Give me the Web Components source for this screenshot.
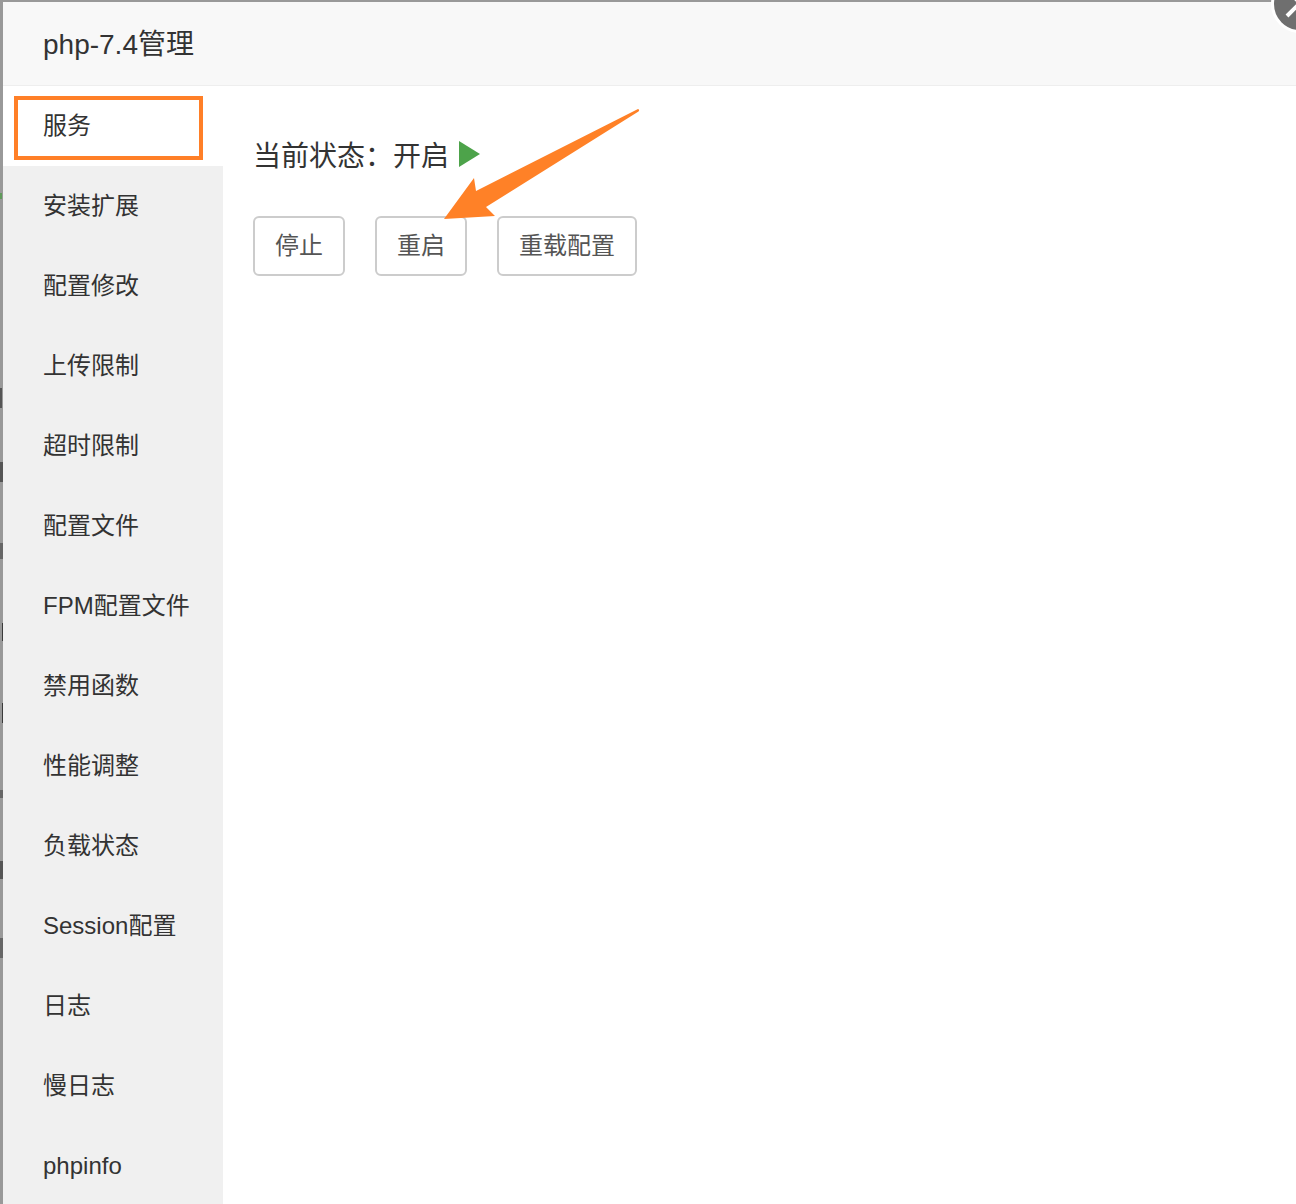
<!DOCTYPE html>
<html lang="zh">
<head>
<meta charset="utf-8">
<title>php-7.4管理</title>
<style>
  html, body { margin: 0; height: 100%; background: #999; }
  body { overflow: hidden; font-family: "Liberation Sans", "Noto Sans CJK SC", sans-serif; }
</style>
</head>
<body>
<php-dialog heading="php-7.4管理">
  <side-menu slot="menu">
    <menu-item active>服务</menu-item>
    <menu-item>安装扩展</menu-item>
    <menu-item>配置修改</menu-item>
    <menu-item>上传限制</menu-item>
    <menu-item>超时限制</menu-item>
    <menu-item>配置文件</menu-item>
    <menu-item>FPM配置文件</menu-item>
    <menu-item>禁用函数</menu-item>
    <menu-item>性能调整</menu-item>
    <menu-item>负载状态</menu-item>
    <menu-item>Session配置</menu-item>
    <menu-item>日志</menu-item>
    <menu-item>慢日志</menu-item>
    <menu-item>phpinfo</menu-item>
  </side-menu>
  <service-panel>
    <soft-button>停止</soft-button>
    <soft-button>重启</soft-button>
    <soft-button>重载配置</soft-button>
  </service-panel>
</php-dialog>

<script>
class PhpDialog extends HTMLElement {
  constructor() {
    super();
    this.attachShadow({ mode: 'open' }).innerHTML = `
      <style>
        :host { display: flex; height: 1204px; box-sizing: border-box; padding: 2px 0 0 3px; position: relative; overflow: hidden;
          color: #333;
          background-color: #999;
          background-image:
            linear-gradient(#555, #555), linear-gradient(#555, #555), linear-gradient(#666, #666), linear-gradient(#3a3a3a, #3a3a3a),
            linear-gradient(#3a3a3a, #3a3a3a), linear-gradient(#666, #666), linear-gradient(#555, #555), linear-gradient(#666, #666),
            linear-gradient(#5f9a5a, #5f9a5a);
          background-repeat: no-repeat;
          background-size: 2px 20px, 3px 20px, 3px 16px, 1px 18px, 1px 20px, 3px 8px, 3px 18px, 3px 20px, 2px 6px;
          background-position: 0 388px, 0 462px, 0 543px, 2px 623px, 2px 703px, 0 790px, 0 861px, 0 938px, 0 193px;
        }
        .box { flex: 1; display: flex; flex-direction: column; min-width: 0; background: #fff; }
        header { flex: 0 0 84px; box-sizing: border-box; background: #f8f8f8; border-bottom: 1px solid #eee;
          padding: 2px 0 0 40px; font-size: 28px; line-height: 81px; }
        .body { flex: 1; display: flex; min-height: 0; }
        .close { position: absolute; top: -25px; left: 1271px; width: 58px; height: 58px; box-sizing: border-box; border-radius: 50%;
          background: #6f6f6f; border: 3px solid #fff; }
        .close svg { display: block; width: 52px; height: 52px; }
        .mark { position: absolute; left: 0; top: 0; width: 1296px; height: 300px; pointer-events: none; }
      </style>
      <div class="box">
        <header></header>
        <div class="body"><slot name="menu"></slot><slot></slot></div>
      </div>
      <div class="close"><svg viewBox="0 0 52 52"><path d="M13 38 L38 13 M14 13 L38 37" stroke="#fff" stroke-width="4" fill="none"/></svg></div>
      <svg class="mark" viewBox="0 0 1296 300">
        <rect x="16" y="98" width="185" height="60" fill="none" stroke="#ff7f27" stroke-width="4"/>
        <path d="M638 109 Q640 110 638.500 111.500 L486 207 L495 216 L444 219 L474 178 L476 191 Z" fill="#ff8127"/>
      </svg>`;
    this.shadowRoot.querySelector('header').textContent = this.getAttribute('heading') || '';
  }
}

class SideMenu extends HTMLElement {
  constructor() {
    super();
    this.attachShadow({ mode: 'open' }).innerHTML = `
      <style>
        :host { display: block; flex: 0 0 220px; background: #f0f0f0; }
      </style>
      <slot></slot>`;
  }
}

class MenuItem extends HTMLElement {
  constructor() {
    super();
    this.attachShadow({ mode: 'open' }).innerHTML = `
      <style>
        :host { display: block; height: 80px; line-height: 80px; padding-left: 40px; font-size: 24px; color: #333; white-space: nowrap; }
        :host([active]) { background: #fff; }
      </style>
      <slot></slot>`;
  }
}

class ServicePanel extends HTMLElement {
  constructor() {
    super();
    this.attachShadow({ mode: 'open' }).innerHTML = `
      <style>
        :host { display: block; flex: 1; padding: 50px 0 0 30px; }
        .status { display: flex; align-items: center; height: 36px; font-size: 28px; color: #333; margin-bottom: 44px; }
        .status svg { width: 22px; height: 26px; margin-left: 9px; }
        .actions { display: flex; gap: 30px; }
      </style>
      <div class="status"><span>当前状态：开启</span><svg viewBox="0 0 22 26"><path d="M1 0 L22 13 L1 26 Z" fill="#4da34a"/></svg></div>
      <div class="actions"><slot></slot></div>`;
  }
}

class SoftButton extends HTMLElement {
  constructor() {
    super();
    this.attachShadow({ mode: 'open' }).innerHTML = `
      <style>
        :host { display: block; box-sizing: border-box; height: 60px; line-height: 56px; padding: 0 20px;
          border: 2px solid #ccc; border-radius: 6px; background: #fff; font-size: 24px; color: #555; }
      </style>
      <slot></slot>`;
  }
}

customElements.define('php-dialog', PhpDialog);
customElements.define('side-menu', SideMenu);
customElements.define('menu-item', MenuItem);
customElements.define('service-panel', ServicePanel);
customElements.define('soft-button', SoftButton);
</script>
</body>
</html>
